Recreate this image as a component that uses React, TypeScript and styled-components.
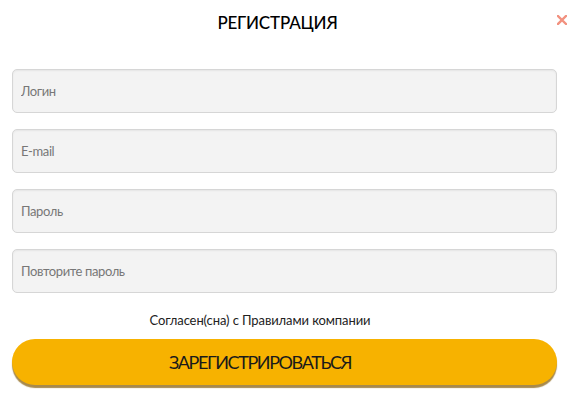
import React from "react";
import styled, { createGlobalStyle } from "styled-components";

const GlobalStyle = createGlobalStyle`
* {
  box-sizing: border-box;
}
body {
  margin: 0;
  background: #ffffff;
  font-family: "Lato", "Noto Sans", sans-serif;
}
`;

const fields = ["Логин", "E-mail", "Пароль", "Повторите пароль"];

const App = () => {
    return (
        <>
        <GlobalStyle />
        <Modal>
            <Head>
                <Title>РЕГИСТРАЦИЯ</Title>
                <Close aria-label="close">
                    <svg width="10" height="10" viewBox="0 0 10 10">
                        <path d="M1 1 L9 9 M9 1 L1 9" stroke="#f2917f" strokeWidth="2.4" strokeLinecap="square" />
                    </svg>
                </Close>
            </Head>

            <Form>
                {fields.map((f) => (
                    <Field key={f} placeholder={f} type="text" />
                ))}

                <Agree>Согласен(сна) с Правилами компании</Agree>

                <Submit type="button">ЗАРЕГИСТРИРОВАТЬСЯ</Submit>
            </Form>
        </Modal>
        </>
    )
}

export default App

const Modal = styled.div`
width: 572px;
height: 414px;
background: #ffffff;
padding: 0 15px 0 12px;
`;

const Head = styled.div`
position: relative;
height: 45px;
display: flex;
align-items: center;
justify-content: center;
padding-right: 14px;
`;

const Title = styled.div`
font-size: 17px;
font-weight: 500;
letter-spacing: -0.2px;
color: #000;
`;

const Close = styled.button`
position: absolute;
right: -10px;
top: 15px;
width: 10px;
height: 10px;
padding: 0;
border: none;
background: none;
display: flex;
cursor: pointer;
`;

const Form = styled.div`
display: flex;
flex-direction: column;
gap: 16px;
padding-top: 24px;
`;

const Field = styled.input`
width: 100%;
height: 44px;
border: 1px solid #d6d6d6;
border-radius: 5px;
background: #f3f3f3;
box-shadow: inset 0 1px 2px rgba(0, 0, 0, 0.06);
padding: 0 8px;
font-family: "Lato", "Noto Sans", sans-serif;
font-size: 13px;
letter-spacing: -0.4px;
color: #333;
outline: none;

&::placeholder {
  color: #777;
}
`;

const Agree = styled.div`
margin-top: 1px;
text-align: center;
padding-right: 49px;
font-size: 13px;
letter-spacing: -0.1px;
color: #222;
line-height: 20px;
`;

const Submit = styled.button`
margin-top: -7px;
width: 100%;
height: 46px;
border: none;
border-radius: 23px;
background: #f7b200;
box-shadow: 0 3px 1px #a88a4c;
padding: 0 49px 0 0;
font-family: "Lato", "Noto Sans", sans-serif;
font-size: 18px;
letter-spacing: -1.4px;
color: #1a1a1a;
cursor: pointer;
`;
